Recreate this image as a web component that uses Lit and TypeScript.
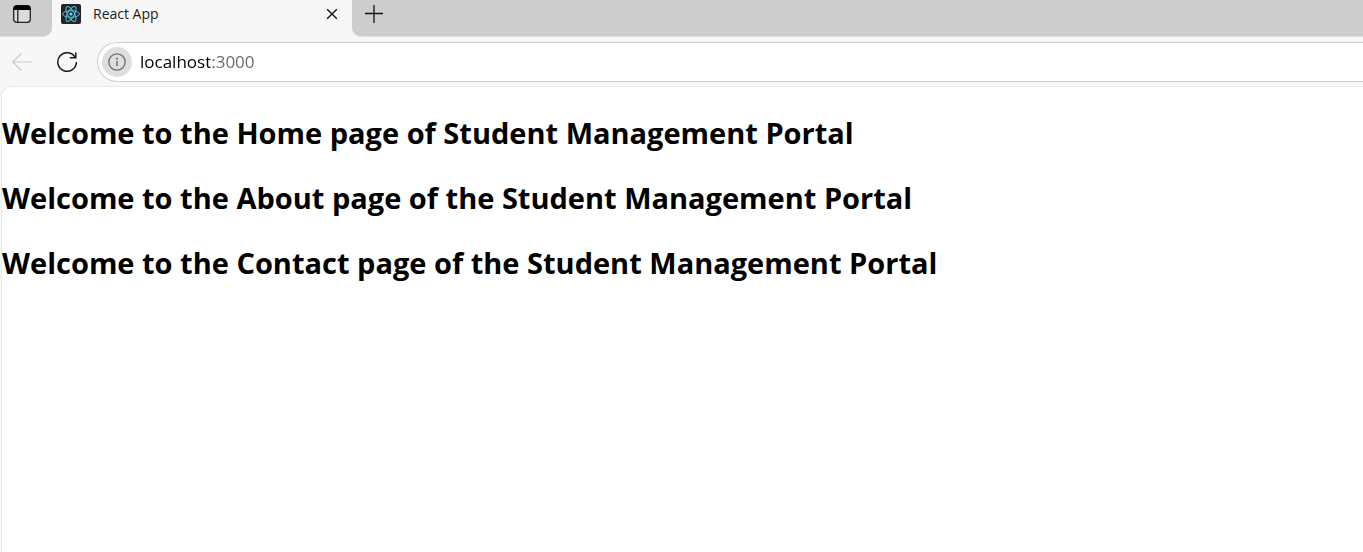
import { LitElement, html, css, svg } from "lit";
import { customElement, property } from "lit/decorators.js";

@customElement("browser-tabs")
class BrowserTabs extends LitElement {
  @property() label = "";

  static styles = css`
    :host {
      display: flex;
      height: 37px;
      background: #f7f7f7;
      font-family: "Segoe UI", "Open Sans", "Noto Sans", sans-serif;
    }
    .lead,
    .rest {
      display: flex;
      box-sizing: border-box;
      background: #cdcdcd;
      border-bottom: 1px solid #dedede;
    }
    .lead {
      width: 52px;
      padding-left: 12px;
      border-bottom-right-radius: 9px;
    }
    .rest {
      flex: 1;
      padding-left: 12px;
      border-bottom-left-radius: 9px;
    }
    .tab {
      display: flex;
      align-items: center;
      box-sizing: border-box;
      width: 300px;
      height: 28px;
      padding: 0 10px 0 9px;
    }
    .title {
      flex: 1;
      padding-left: 12px;
      font-size: 14px;
      line-height: 20px;
      color: #1b1b1b;
    }
    button {
      display: flex;
      align-items: center;
      justify-content: center;
      width: 20px;
      height: 28px;
      padding: 0;
      border: 0;
      background: none;
      color: #111;
    }
    svg {
      display: block;
      flex: none;
    }
  `;

  render() {
    return html`
      <div class="lead">
        <button aria-label="Tab actions">
          <svg width="20" height="20" viewBox="0 0 20 20">
            <rect x="1.7" y="1.7" width="16.6" height="16.6" rx="3" fill="#dcdcdc" stroke="#222" stroke-width="1.3" />
            <path d="M1.5 6V4.5a3 3 0 0 1 3-3h11a3 3 0 0 1 3 3V6Z" fill="#000" />
            <path d="M5.8 6v12" stroke="#111" stroke-width="1.2" />
          </svg>
        </button>
      </div>
      <div class="tab">
        <svg width="20" height="20" viewBox="0 0 20 20">
          <rect width="20" height="20" rx="2" fill="#222326" />
          <g fill="none" stroke="#53c1de" stroke-width="1">
            ${[0, 60, 120].map(
              (a) => svg`<ellipse cx="10" cy="10" rx="8.4" ry="3.3" transform="rotate(${a} 10 10)" />`
            )}
          </g>
          <circle cx="10" cy="10" r="1.6" fill="#61dafb" />
        </svg>
        <span class="title">${this.label}</span>
        <button aria-label="Close tab">
          <svg width="12" height="12" viewBox="0 0 12 12">
            <path d="M1.2 1.2l9.6 9.6M10.8 1.2l-9.6 9.6" stroke="currentColor" stroke-width="1.4" />
          </svg>
        </button>
      </div>
      <div class="rest">
        <button aria-label="New tab">
          <svg width="18" height="18" viewBox="0 0 18 18">
            <path d="M9 0v18M0 8.5h18" stroke="currentColor" stroke-width="1.3" />
          </svg>
        </button>
      </div>
    `;
  }
}

@customElement("address-bar")
class AddressBar extends LitElement {
  @property() url = "";

  static styles = css`
    :host {
      display: flex;
      align-items: center;
      padding: 5px 0 4px 11px;
      background: #f7f7f7;
      font-family: "Segoe UI", "Open Sans", "Noto Sans", sans-serif;
      overflow: hidden;
    }
    button {
      display: flex;
      align-items: center;
      justify-content: center;
      padding: 0;
      border: 0;
      background: none;
    }
    svg {
      display: block;
    }
    .back {
      width: 22px;
      color: #cbcbcb;
    }
    .reload {
      width: 22px;
      margin: 0 19px 0 23px;
      color: #1a1a1a;
    }
    .field {
      display: flex;
      flex: 1;
      align-items: center;
      box-sizing: border-box;
      height: 40px;
      padding-left: 4px;
      border: 1px solid #cfcfcf;
      border-right: 0;
      border-radius: 20px 0 0 20px;
      background: #fff;
    }
    .info {
      width: 30px;
      height: 30px;
      border-radius: 50%;
      background: #dedede;
      color: #6c6c6c;
    }
    input {
      flex: 1;
      min-width: 0;
      height: 28px;
      margin: 0 0 0 8px;
      padding: 0 0 2px;
      box-sizing: border-box;
      border: 0;
      outline: 0;
      font: inherit;
      font-size: 17px;
      color: transparent;
      background: linear-gradient(90deg, #000 70px, #666 70px);
      -webkit-background-clip: text;
      background-clip: text;
    }
  `;

  render() {
    return html`
      <button class="back" aria-label="Back" disabled>
        <svg width="22" height="20" viewBox="0 0 22 20">
          <path d="M10.5 1.5L1.7 10l8.8 8.5M1.7 10H21" fill="none" stroke="currentColor" stroke-width="1.2" />
        </svg>
      </button>
      <button class="reload" aria-label="Refresh">
        <svg width="22" height="22" viewBox="0 0 22 22">
          <path d="M19.3 6.6A9.3 9.3 0 1 0 20.4 11M19.8 1.4v5.4h-6" fill="none" stroke="currentColor" stroke-width="1.5" />
        </svg>
      </button>
      <div class="field">
        <button class="info" aria-label="View site information">
          <svg width="18" height="18" viewBox="0 0 18 18">
            <circle cx="9" cy="9" r="8.2" fill="none" stroke="currentColor" stroke-width="1.3" />
            <circle cx="9" cy="5.7" r="1" fill="currentColor" />
            <path d="M9 8v5" stroke="currentColor" stroke-width="1.5" />
          </svg>
        </button>
        <input type="text" aria-label="Address" spellcheck="false" .value=${this.url} />
      </div>
    `;
  }
}

@customElement("app-root")
class AppRoot extends LitElement {
  static styles = css`
    :host {
      display: flex;
      flex-direction: column;
      min-height: 100vh;
      background: #f7f7f7;
      font-family: "Segoe UI", "Open Sans", "Noto Sans", sans-serif;
    }
    main {
      flex: 1;
      margin-left: 1px;
      padding-top: 25px;
      border: solid #e9e9e9;
      border-width: 1px 0 0 1px;
      border-top-left-radius: 10px;
      background: #fff;
    }
    h1 {
      margin: 0 0 24px;
      font-size: 29px;
      line-height: 41px;
      font-weight: 700;
      color: #000;
    }
  `;

  render() {
    const pages = ["Home page of", "About page of the", "Contact page of the"];
    return html`
      <browser-tabs label="React App"></browser-tabs>
      <address-bar url="localhost:3000"></address-bar>
      <main>${pages.map((p) => html`<h1>Welcome to the ${p} Student Management Portal</h1>`)}</main>
    `;
  }
}
